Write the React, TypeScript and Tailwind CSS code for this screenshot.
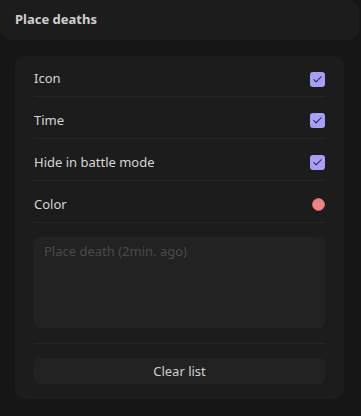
import { Check } from 'lucide-react';

const rows = ['Icon', 'Time', 'Hide in battle mode'];

export default function App() {
  return (
    <div className="w-[361px] h-[416px] bg-[#161616] text-[13px] text-[#d6d6d6]" style={{ fontFamily: '"Noto Sans", "Open Sans", sans-serif' }}>
      <div className="h-[40px] w-[359px] bg-[#1c1c1c] rounded-b-[12px] rounded-tr-[12px] flex items-center px-[15px]">
        <span className="font-bold text-[13px] text-[#cfcfcf]">Place deaths</span>
      </div>

      <div className="mx-[15px] mt-[16px] w-[329px] bg-[#1c1c1c] rounded-[10px] px-[19px] pb-[15px]">
        {rows.map((label) => (
          <div key={label} className="h-[42px] first:h-[41px] pt-[6px] flex items-center justify-between border-b border-[#262626]">
            <span>{label}</span>
            <span className="w-[15px] h-[15px] rounded-[3px] bg-[#a79ef7] flex items-center justify-center">
              <Check size={11} strokeWidth={2.25} className="text-[#1e1e2e]" />
            </span>
          </div>
        ))}
        <div className="h-[42px] pt-[6px] flex items-center justify-between border-b border-[#262626]">
          <span>Color</span>
          <span className="w-[13px] h-[13px] rounded-full bg-[#ee8383] border border-[#c96a6a]" />
        </div>

        <textarea
          placeholder="Place death (2min. ago)"
          className="mt-[14px] block w-full h-[91px] resize-none rounded-[6px] bg-[#222222] px-[10px] pt-[5px] pb-[4px] text-[13px] text-[#cfcfcf] placeholder:text-[#4b4b4b] outline-none"
        />

        <div className="mt-[15px] border-t border-[#262626]" />

        <button className="mt-[14px] w-full h-[26px] pt-[2px] rounded-[6px] bg-[#222222] text-[#cfcfcf] text-[13px]">
          Clear list
        </button>
      </div>
    </div>
  );
}
